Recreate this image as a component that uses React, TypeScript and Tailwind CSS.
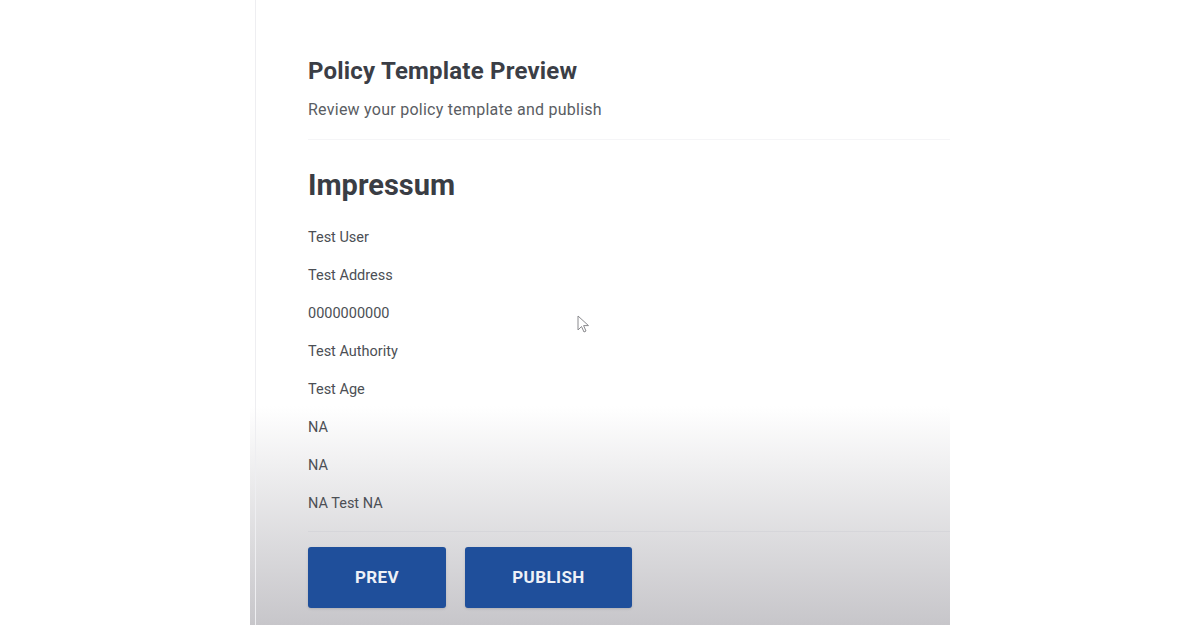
import React from 'react';

const fields = [
  'Test User',
  'Test Address',
  '0000000000',
  'Test Authority',
  'Test Age',
  'NA',
  'NA',
  'NA Test NA',
];

function Cursor() {
  return (
    <svg width="13" height="19" viewBox="0 0 13 19" className="absolute left-[577px] top-[315px]">
      <path
        d="M1 1 L1 15 L4.5 11.5 L7 17 L9 16 L6.6 10.6 L11.5 10.6 Z"
        fill="#fff"
        stroke="#8a8a8e"
        strokeWidth="1"
        strokeLinejoin="round"
      />
    </svg>
  );
}

export default function App() {
  return (
    <div className="relative w-full h-[625px] bg-white flex font-['Roboto','Liberation_Sans',sans-serif] overflow-hidden">
      <div className="w-[250px] shrink-0" />
      <div className="w-[700px] shrink-0 h-full pl-[5px] bg-linear-to-b from-white from-[65%] to-[#c7c6ca]">
        <div className="h-full border-l border-[#eeeef1] pl-[52px] pt-[56px] flex flex-col">
          <h1 className="text-[24px] leading-[30px] font-bold text-[#3b3e46] tracking-[0.2px]">Policy Template Preview</h1>
          <p className="mt-[13px] text-[16px] leading-[21px] text-[#5a5d63] tracking-[0.25px]">Review your policy template and publish</p>
          <div className="mt-[19px] border-t border-[#f5f5f7]" />
          <h2 className="mt-[28px] text-[29px] leading-[35px] font-bold text-[#3a3d44]">Impressum</h2>
          <ul className="mt-[25px] flex flex-col gap-[18px]">
            {fields.map((f, i) => (
              <li key={i} className="text-[14.5px] leading-[20px] text-[#4c4f55]">
                {f}
              </li>
            ))}
          </ul>
          <div className="mt-[17px] border-t border-[#d6d6da]" />
          <div className="mt-[15px] flex gap-[19px]">
            <button className="w-[138px] h-[61px] rounded-[3px] bg-[#1f4f9b] text-[#eef1f7] text-[17px] font-bold tracking-wide shadow-sm">
              PREV
            </button>
            <button className="w-[167px] h-[61px] rounded-[3px] bg-[#1f4f9b] text-[#eef1f7] text-[17px] font-bold tracking-wide shadow-sm">
              PUBLISH
            </button>
          </div>
        </div>
      </div>
      <Cursor />
    </div>
  );
}
